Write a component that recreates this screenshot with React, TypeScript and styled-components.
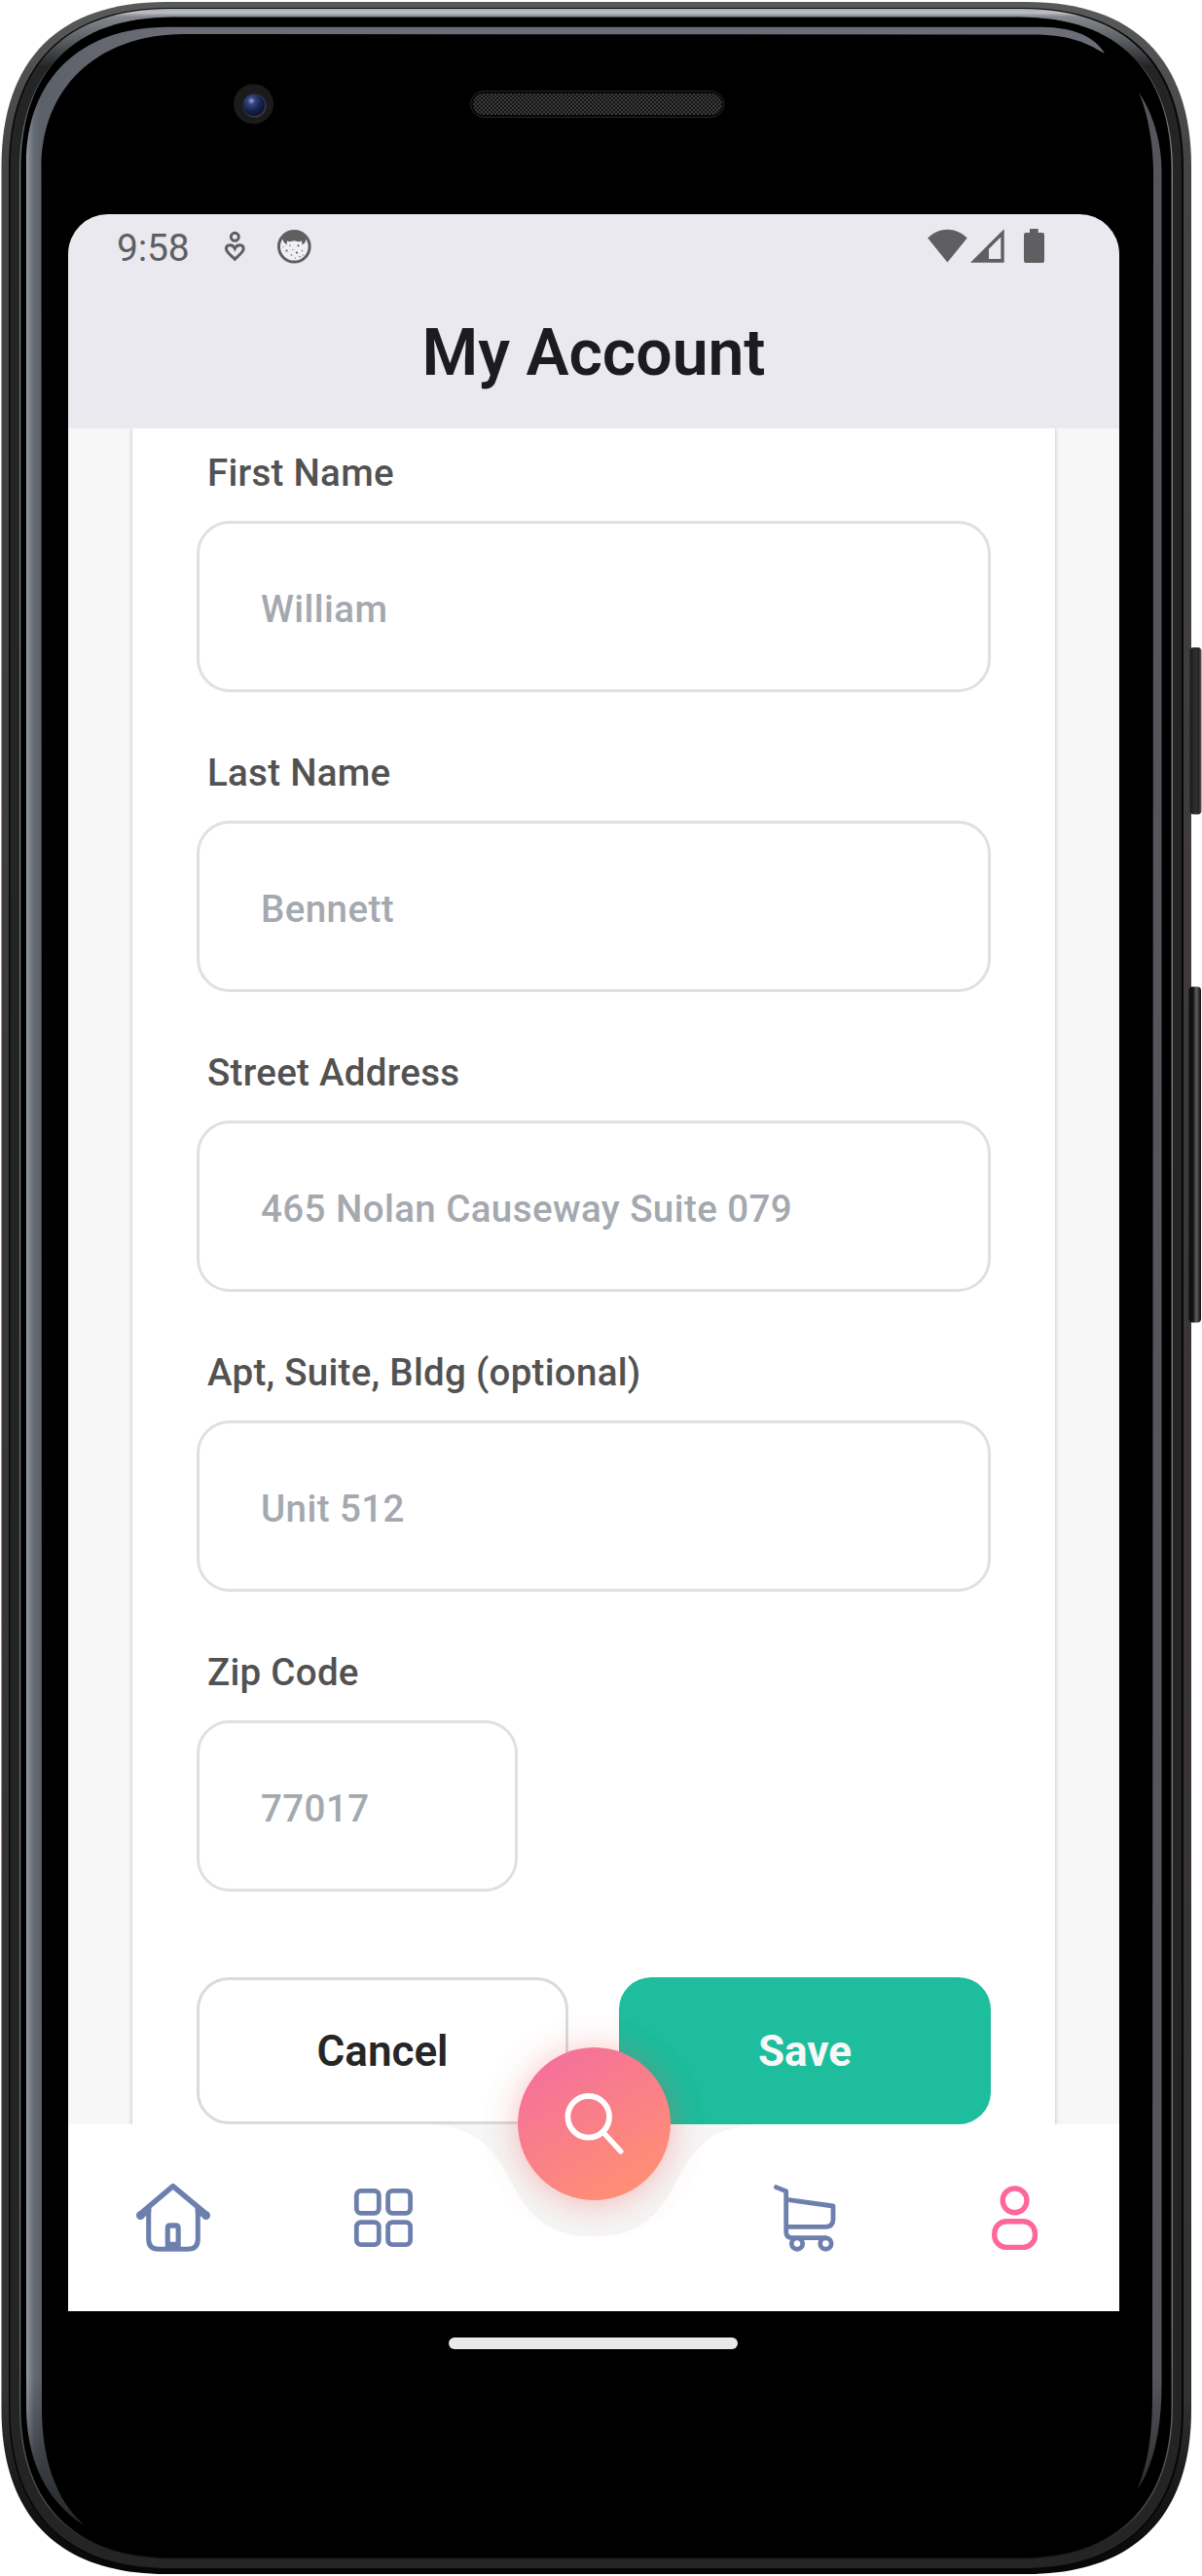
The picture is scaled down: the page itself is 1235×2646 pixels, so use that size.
import React from 'react';
import styled, { createGlobalStyle } from 'styled-components';

const GlobalStyle = createGlobalStyle`
  *, *::before, *::after { box-sizing: border-box; }
  html, body { margin: 0; padding: 0; background: #fff; }
  body { font-family: Roboto, "Liberation Sans", sans-serif; }
`;

const Device = styled.main`
  position: relative;
  width: 1235px;
  height: 2646px;
  padding: 220px 85px 0 70px;
  overflow: hidden;
`;

const DeviceArt = styled.svg`
  position: absolute;
  inset: 0;
  display: block;
`;

const Screen = styled.section`
  position: relative;
  width: 1080px;
  display: flex;
  flex-direction: column;
`;

const TopArea = styled.header`
  height: 220px;
  background: #eae9ef;
  border-radius: 41px 41px 0 0;
  display: flex;
  flex-direction: column;
`;

const StatusBar = styled.div`
  height: 66px;
  padding: 0 74px 0 50px;
  display: flex;
  align-items: center;
  color: #5f5f61;
`;

const Clock = styled.time`
  width: 100px;
  font-size: 39px;
  line-height: 66px;
  letter-spacing: -0.2px;
  padding-top: 4px;
`;

const Notifications = styled.div`
  display: flex;
  align-items: center;
  gap: 22px;
  flex: 1;
`;

const SystemIcons = styled.div`
  display: flex;
  align-items: center;
`;

const StatusIcon = styled.svg<{ $gap?: number }>`
  display: block;
  margin-left: ${(p) => p.$gap ?? 0}px;
`;

const Title = styled.h1`
  margin: 0;
  font-size: 66px;
  font-weight: 600;
  line-height: 78px;
  padding-top: 38px;
  text-align: center;
  color: #1c1b20;
`;

const Body = styled.div`
  height: 1742px;
  background: #f7f7f7;
  display: flex;
  justify-content: center;
  overflow: hidden;
`;

const Card = styled.form`
  width: 948px;
  height: 1900px;
  flex: none;
  background: #fff;
  padding: 17px 66px 0;
  box-shadow: 0 0 4px rgba(0, 0, 0, 0.24), 0 0 10px rgba(0, 0, 0, 0.03);
`;

const Field = styled.label`
  display: block;
  height: 308px;
`;

const FieldLabel = styled.span`
  display: block;
  height: 78px;
  padding: 1px 0 0 11px;
  font-size: 38.5px;
  font-weight: 500;
  line-height: 56px;
  letter-spacing: 0.28px;
  color: #525252;
`;

const Input = styled.input<{ $width: number }>`
  display: block;
  width: ${(p) => p.$width}px;
  height: 176px;
  border: 3px solid #e0e0e0;
  border-radius: 34px;
  background: #fff;
  padding: 4px 60px 0 63px;
  font-family: inherit;
  font-size: 38.5px;
  font-weight: 500;
  letter-spacing: 0.42px;
  color: #a4a9b0;
  outline: none;
`;

const Actions = styled.div`
  display: flex;
  justify-content: space-between;
  margin-top: 34px;
`;

const Button = styled.button<{ $primary?: boolean }>`
  width: 382px;
  height: 151px;
  border-radius: 33px;
  border: ${(p) => (p.$primary ? '0' : '3px solid #dadada')};
  background: ${(p) => (p.$primary ? '#1dbd9d' : '#fff')};
  color: ${(p) => (p.$primary ? '#f7f7f7' : '#262626')};
  font-family: inherit;
  font-size: 44px;
  font-weight: ${(p) => (p.$primary ? 700 : 600)};
  padding: 0;
`;

const NavBar = styled.nav`
  position: relative;
  height: 192px;
  background: #fff;
  display: grid;
  grid-template-columns: repeat(5, 1fr);
  align-items: center;
  justify-items: center;
`;

const Notch = styled.svg`
  position: absolute;
  left: 370px;
  top: 0;
`;

const NavIcon = styled.svg<{ $active?: boolean }>`
  display: block;
  color: ${(p) => (p.$active ? '#ff6699' : '#6d80ad')};
`;

const SearchButton = styled.button`
  position: relative;
  top: -96.5px;
  width: 157px;
  height: 157px;
  border: 0;
  padding: 0;
  border-radius: 50%;
  background: linear-gradient(148deg, #f46f9c 8%, #ff9172 92%);
  box-shadow: 0 3px 34px rgba(255, 72, 72, 0.34), 0 4px 64px rgba(120, 120, 120, 0.04);
`;

const GestureBar = styled.div`
  height: 66px;
  display: flex;
  justify-content: center;
  align-items: flex-start;
  padding: 27px 1px 0 0;
`;

const GesturePill = styled.div`
  width: 297px;
  height: 12px;
  border-radius: 6px;
  background: #e9e9e9;
`;

/* Body outline with the soft, slightly squarish corners of the handset. */
const shell = (l: number, t: number, r: number, b: number, c: number) => {
  const k = c * 0.35;
  return `M${l} ${t + c} C${l} ${t + k} ${l + k} ${t} ${l + c} ${t} L${r - c} ${t}
    C${r - k} ${t} ${r} ${t + k} ${r} ${t + c} L${r} ${b - c}
    C${r} ${b - k} ${r - k} ${b} ${r - c} ${b} L${l + c} ${b}
    C${l + k} ${b} ${l} ${b - k} ${l} ${b - c} Z`;
};

const leftGlass =
  'M27 168 C27 82 82 27.8 172 27.8 L1070 27.8 C1104 28 1125 38 1135 55 C1113 42 1096 35.5 1060 35.5 L190 35 C98 35 42.5 92 42.5 172 L43 2475 C43 2530 60 2572 87 2594 C48 2570 27 2528 27 2470 Z';
const rightGlass =
  'M1170 95 C1184 115 1193.5 145 1193.5 175 L1193.5 2450 C1193.5 2492 1186 2532 1169 2556 C1179 2530 1184 2505 1184 2460 L1185 175 C1185 148 1179 115 1170 95 Z';

function Handset() {
  return (
    <DeviceArt width="1235" height="2646" viewBox="0 0 1235 2646" fill="none" aria-hidden="true">
      <defs>
        <linearGradient id="rim" gradientUnits="userSpaceOnUse" x1="0" y1="0" x2="0" y2="2646">
          <stop offset="0" stopColor="#5a5a5a" />
          <stop offset="0.06" stopColor="#454343" />
          <stop offset="0.5" stopColor="#3b3736" />
          <stop offset="0.93" stopColor="#333131" />
          <stop offset="0.97" stopColor="#161616" />
          <stop offset="1" stopColor="#050505" />
        </linearGradient>
        <linearGradient id="band" gradientUnits="userSpaceOnUse" x1="0" y1="8" x2="0" y2="108">
          <stop offset="0" stopColor="#a5a9ad" />
          <stop offset="0.05" stopColor="#bcc0c4" />
          <stop offset="0.09" stopColor="#85898e" />
          <stop offset="0.32" stopColor="#5d6166" />
          <stop offset="0.6" stopColor="#242526" />
          <stop offset="1" stopColor="#232424" />
        </linearGradient>
        <linearGradient id="hairline" gradientUnits="userSpaceOnUse" x1="0" y1="0" x2="0" y2="2646">
          <stop offset="0" stopColor="#000" />
          <stop offset="0.02" stopColor="#666" />
          <stop offset="0.06" stopColor="#808285" />
          <stop offset="0.9" stopColor="#747678" />
          <stop offset="0.975" stopColor="#4a4a4a" />
          <stop offset="0.99" stopColor="#181818" />
        </linearGradient>
        <linearGradient id="glass" gradientUnits="userSpaceOnUse" x1="26" y1="0" x2="200" y2="0">
          <stop offset="0" stopColor="#a3a6aa" />
          <stop offset="0.02" stopColor="#848990" />
          <stop offset="0.05" stopColor="#656b74" />
          <stop offset="0.095" stopColor="#5b6069" />
          <stop offset="0.5" stopColor="#666870" />
          <stop offset="1" stopColor="#6b6e77" />
        </linearGradient>
        <linearGradient id="glassShade" gradientUnits="userSpaceOnUse" x1="0" y1="2440" x2="0" y2="2600">
          <stop offset="0" stopColor="#000" stopOpacity="0" />
          <stop offset="1" stopColor="#000" stopOpacity="0.65" />
        </linearGradient>
        <linearGradient id="key" x1="0" y1="0" x2="1" y2="0">
          <stop offset="0" stopColor="#1b1b1b" />
          <stop offset="0.5" stopColor="#303030" />
          <stop offset="0.75" stopColor="#242424" />
          <stop offset="1" stopColor="#5c605e" />
        </linearGradient>
        <linearGradient id="rocker" x1="0" y1="0" x2="1" y2="0">
          <stop offset="0" stopColor="#0c0c0c" />
          <stop offset="0.35" stopColor="#151515" />
          <stop offset="0.62" stopColor="#606060" />
          <stop offset="0.85" stopColor="#2a2a2a" />
          <stop offset="1" stopColor="#111" />
        </linearGradient>
        <radialGradient id="lens" cx="0.38" cy="0.3" r="0.75">
          <stop offset="0" stopColor="#9daad0" />
          <stop offset="0.22" stopColor="#35477f" />
          <stop offset="0.6" stopColor="#162250" />
          <stop offset="1" stopColor="#0d1228" />
        </radialGradient>
        <pattern id="mesh" width="4" height="4" patternUnits="userSpaceOnUse">
          <rect width="4" height="4" fill="#131413" />
          <rect width="2" height="2" fill="#3a3c3a" />
          <rect x="2" y="2" width="2" height="2" fill="#3a3c3a" />
        </pattern>
      </defs>
      <path d={shell(1.5, 2, 1224, 2644, 169)} fill="url(#rim)" />
      <rect x="1222.5" y="665" width="12" height="171.5" rx="4" fill="url(#key)" />
      <rect x="1221.5" y="1013.5" width="12.5" height="345" rx="4" fill="url(#rocker)" />
      <path d={shell(9, 8, 1216, 2639, 165)} fill="#060606" />
      <path d={shell(10.5, 9, 1214, 2638, 164)} fill="url(#band)" />
      <path d={shell(20, 18, 1205, 2628.5, 158)} fill="url(#hairline)" />
      <path d={shell(21.2, 17.5, 1203.6, 2627.5, 157)} fill="#000" />
      <path d={leftGlass} fill="url(#glass)" />
      <path d={leftGlass} fill="url(#glassShade)" />
      <path d={rightGlass} fill="#55565c" />
      <path d={rightGlass} fill="url(#glassShade)" />
      <circle cx="260.5" cy="106.8" r="20.5" fill="#1b1b1c" />
      <circle cx="261.5" cy="108.5" r="12" fill="#404248" />
      <circle cx="261" cy="108" r="11.3" fill="url(#lens)" />
      <rect x="483.5" y="93.5" width="260.5" height="27" rx="13.5" fill="#070707" stroke="#242524" />
      <rect x="486" y="96" width="256" height="22" rx="11" fill="url(#mesh)" />
    </DeviceArt>
  );
}

const fields = [
  { label: 'First Name', value: 'William', width: 816 },
  { label: 'Last Name', value: 'Bennett', width: 816 },
  { label: 'Street Address', value: '465 Nolan Causeway Suite 079', width: 816 },
  { label: 'Apt, Suite, Bldg (optional)', value: 'Unit 512', width: 816 },
  { label: 'Zip Code', value: '77017', width: 330 },
];

const iconBox = { width: 80, height: 80, viewBox: '-40 -40 80 80', fill: 'none' };
const line = { stroke: 'currentColor', strokeLinecap: 'round', strokeLinejoin: 'round' } as const;

export default function App() {
  return (
    <Device>
      <GlobalStyle />
      <Handset />
      <Screen>
        <TopArea>
          <StatusBar>
            <Clock>9:58</Clock>
            <Notifications>
              <StatusIcon width="40" height="40" viewBox="0 0 40 40" fill="none" stroke="currentColor">
                <circle cx="21.3" cy="10.3" r="4" strokeWidth="3" />
                <path d="M21.3 33.2 C18 29.5 12.4 26.4 12.4 22.6 C12.4 17.8 18.9 17.4 21.3 22.4 C23.7 17.4 30.2 17.8 30.2 22.6 C30.2 26.4 24.6 29.5 21.3 33.2 Z" strokeWidth="3" strokeLinejoin="miter" />
              </StatusIcon>
              <StatusIcon width="40" height="40" viewBox="0 0 40 40">
                <circle cx="20.3" cy="20.3" r="15.8" fill="#f0eff4" stroke="currentColor" strokeWidth="3" />
                <path d="M8 12 C12 3 28 3 32.5 12 L31.5 16 L28.5 18.5 L28 14.2 C25 16.5 22 14.2 20.3 14.2 C18 14.2 16 16.5 13 14.2 L12.5 18.5 L9.5 15.5 Z" fill="currentColor" />
                <g fill="currentColor">
                  <circle cx="12.5" cy="24.5" r="1.1" /><circle cx="24.5" cy="19.3" r="1.1" />
                  <circle cx="23" cy="26.5" r="1.1" /><circle cx="16" cy="19.2" r="0.8" />
                  <circle cx="17.5" cy="29" r="0.8" /><circle cx="28.5" cy="24.5" r="0.7" />
                  <circle cx="19" cy="23.5" r="0.6" /><circle cx="26" cy="30.5" r="0.7" />
                  <circle cx="9" cy="20.5" r="0.6" /><circle cx="29.5" cy="29" r="0.6" />
                  <circle cx="21.5" cy="32" r="0.6" />
                </g>
              </StatusIcon>
            </Notifications>
            <SystemIcons>
              <StatusIcon width="44" height="40" viewBox="0 0 44 40" fill="currentColor">
                <path d="M1.2 11.6 C12.5 -0.2 30.3 -0.2 41.7 11.6 L21.4 36.4 Z" />
              </StatusIcon>
              <StatusIcon width="40" height="40" viewBox="0 0 40 40" fill="currentColor">
                <path fillRule="evenodd" d="M1 36.8 L35.7 2.2 V36.8 Z M20 22.8 V33 H32.3 V10.4 Z" />
              </StatusIcon>
              <StatusIcon width="26" height="40" viewBox="0 0 26 40" fill="currentColor" $gap={14}>
                <path d="M8 2 h8.7 v4 H21 q2 0 2 2 V35 q0 2 -2 2 H4 q-2 0 -2 -2 V8 q0 -2 2 -2 H8 Z" />
              </StatusIcon>
            </SystemIcons>
          </StatusBar>
          <Title>My Account</Title>
        </TopArea>

        <Body>
          <Card onSubmit={(e) => e.preventDefault()}>
            {fields.map((f) => (
              <Field key={f.label}>
                <FieldLabel>{f.label}</FieldLabel>
                <Input $width={f.width} defaultValue={f.value} />
              </Field>
            ))}
            <Actions>
              <Button type="button">Cancel</Button>
              <Button type="submit" $primary>Save</Button>
            </Actions>
          </Card>
        </Body>

        <NavBar>
          <Notch width="340" height="120" viewBox="370 0 340 120">
            <path d="M374 0 C422 4 438 26 457 62 C475 97 496 115 540 115 C584 115 605 97 623 62 C642 26 658 4 706 0 Z" fill="#f6f6f6" />
          </Notch>
          <NavIcon {...iconBox} role="img" aria-label="Home">
            <path {...line} strokeWidth="5" d="M-25.3 -11 V22 Q-25.3 32.3 -15 32.3 H15 Q25.3 32.3 25.3 22 V-11" />
            <path {...line} strokeWidth="5.4" d="M-34.6 -3.4 L-0.3 -32.4 L34.6 -3.4" />
            <path {...line} strokeWidth="6" fill="currentColor" d="M-34 -1.6 L-25.6 -9 V-6.5 Z M34 -1.6 L25.6 -9 V-6.5 Z" />
            <circle cx="-33.6" cy="-2.4" r="4.4" fill="currentColor" />
            <circle cx="33.6" cy="-2.4" r="4.4" fill="currentColor" />
            <path fill="currentColor" fillRule="evenodd" d="M-8.3 32 V10.5 Q-8.3 5.3 -3.2 5.3 H2.6 Q7.7 5.3 7.7 10.5 V32 Z M-3.2 10.8 V24.8 H2.6 V10.8 Z" />
          </NavIcon>
          <NavIcon {...iconBox} role="img" aria-label="Categories">
            {[-27.7, 4.6].map((y) =>
              [-27.7, 4.6].map((x) => (
                <rect key={`${x}${y}`} x={x} y={y} width="23" height="23" rx="4.6" stroke="currentColor" strokeWidth="4.8" />
              )),
            )}
          </NavIcon>
          <SearchButton type="button" aria-label="Search">
            <svg width="157" height="157" viewBox="-78.5 -78.5 157 157" fill="none" stroke="#fff" strokeLinecap="round">
              <circle cx="-5.8" cy="-7.2" r="21.3" strokeWidth="5.8" />
              <path d="M9.5 9 L27.3 28.3" strokeWidth="5.4" />
            </svg>
          </SearchButton>
          <NavIcon {...iconBox} role="img" aria-label="Cart">
            <path {...line} strokeWidth="4.8" d="M-28.6 -31.4 L-18.3 -27.2 V14.5 Q-18.3 20.7 -12 20.7 H22" />
            <path {...line} strokeWidth="4.8" d="M-17.5 -18.6 L30 -12 V1.5 Q30 9.3 22.5 9.3 H-17.5" />
            <circle cx="-7" cy="26.6" r="5.7" stroke="currentColor" strokeWidth="4.8" />
            <circle cx="22.4" cy="26.6" r="5.7" stroke="currentColor" strokeWidth="4.8" />
          </NavIcon>
          <NavIcon {...iconBox} $active role="img" aria-label="Account">
            <circle cx="0.6" cy="-17.7" r="12.4" stroke="currentColor" strokeWidth="5.4" />
            <rect x="-20.3" y="3.8" width="41.8" height="26.6" rx="12.5" stroke="currentColor" strokeWidth="5.4" />
          </NavIcon>
        </NavBar>
        <GestureBar>
          <GesturePill />
        </GestureBar>
      </Screen>
    </Device>
  );
}
